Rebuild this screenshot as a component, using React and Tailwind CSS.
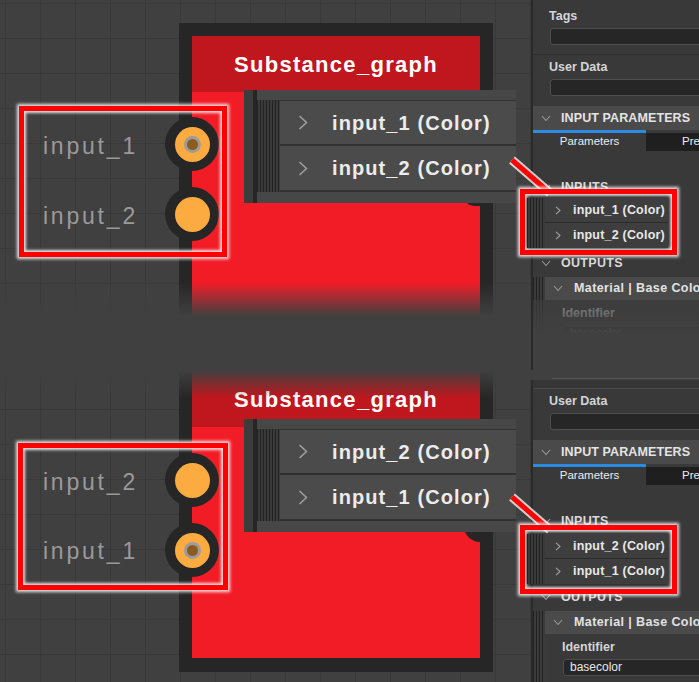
import React from "react";

const GRID =
  "bg-[linear-gradient(to_right,#393939_1px,transparent_1px),linear-gradient(to_bottom,#393939_1px,transparent_1px)] bg-[size:35px_35px]";
const STRIPES =
  "bg-[repeating-linear-gradient(to_right,#222222_0px,#222222_1px,#3a3a3a_1px,#3a3a3a_3px)]";
const GLOW = "shadow-[0_0_3px_2px_#ffffffd9,inset_0_0_3px_2px_#ffffffd9]";

const scenes = [
  {
    key: "top",
    height: "h-[370px]",
    grid: "bg-[position:5px_3px]",
    node: "top-[23px] h-[300px]",
    sockets: ["top-[117px]", "top-[187px]"],
    labels: ["top-[131px]", "top-[201px]"],
    order: ["input_1", "input_2"],
    popup: "top-[90px]",
    knob: "top-[196px] h-[10px]",
    leftBox: "top-[106px] h-[151px] left-[19px] w-[208px]",
    rightBox: "top-[189px] h-[66px]",
    line: "top-[153px]",
  },
  {
    key: "bottom",
    height: "h-[312px]",
    grid: "bg-[position:5px_4px]",
    node: "top-[-12px] h-[314px] pb-[14px]",
    sockets: ["top-[83px]", "top-[153px]"],
    labels: ["top-[97px]", "top-[166px]"],
    order: ["input_2", "input_1"],
    popup: "top-[49px]",
    knob: "top-[150px] h-[22px]",
    leftBox: "top-[73px] h-[147px] left-[18px] w-[210px]",
    rightBox: "top-[155px] h-[69px]",
    line: "top-[120px]",
  },
];

function Chevron({ dir = "right", big = false }) {
  if (dir === "down")
    return (
      <svg width="10" height="7" viewBox="0 0 10 7" className="shrink-0">
        <polyline points="1,1 5,5.5 9,1" fill="none" stroke="#9a9a9a" strokeWidth="1.1" />
      </svg>
    );
  if (big)
    return (
      <svg width="10" height="15" viewBox="0 0 10 15" className="shrink-0">
        <polyline points="1.5,1 8.5,7.5 1.5,14" fill="none" stroke="#a0a0a0" strokeWidth="1.5" />
      </svg>
    );
  return (
    <svg width="6" height="9" viewBox="0 0 6 9" className="shrink-0">
      <polyline points="1,0.8 5,4.5 1,8.2" fill="none" stroke="#a0a0a0" strokeWidth="1.1" />
    </svg>
  );
}

function Socket({ className, active }) {
  return (
    <div
      className={`absolute left-[165px] w-[54px] h-[54px] rounded-full bg-[#262626] flex items-center justify-center ${className}`}
    >
      <div className="w-[35px] h-[35px] rounded-full bg-[#fbab3f] flex items-center justify-center">
        {active && (
          <div className="w-[17px] h-[17px] rounded-full bg-[#9c9c9c] flex items-center justify-center">
            <div className="w-[11px] h-[11px] rounded-full bg-[#8b5b20]" />
          </div>
        )}
      </div>
    </div>
  );
}

function Node({ className }) {
  return (
    <div
      className={`absolute left-[179px] w-[314px] bg-[#262626] px-[13px] pt-[13px] flex flex-col ${className}`}
    >
      <div className="h-[56px] shrink-0 bg-[#c0161d] flex items-center justify-center">
        <span className="text-white text-[22px] font-bold tracking-[1.3px]">Substance_graph</span>
      </div>
      <div className="flex-1 bg-[#f21c27]" />
    </div>
  );
}

function Popup({ className, items }) {
  return (
    <div className={`absolute left-[244px] w-[272px] h-[113px] bg-[#474747] flex ${className}`}>
      <div className="w-[9px] bg-[#3c3c3c]" />
      <div className="w-[4px] bg-[#262626]" />
      <div className="flex-1 flex flex-col pt-[10px]">
        {items.map((t, i) => (
          <div key={t} className="flex h-[46px]">
            <div className={`w-[23px] ${STRIPES}`} />
            <div
              className={`flex-1 flex items-center pl-[18px] bg-[#4b4b4b] border-b-2 border-[#303030] ${
                i === 0 ? "border-t border-t-[#333333]" : ""
              }`}
            >
              <Chevron big />
              <span className="ml-[24px] text-[20px] font-bold tracking-[1.1px] text-[#ececec]">
                {t} (Color)
              </span>
            </div>
          </div>
        ))}
      </div>
    </div>
  );
}

function SectionTitle({ children, className = "" }) {
  return (
    <div className={`h-4 flex items-center pl-[8px] ${className}`}>
      <Chevron dir="down" />
      <span className="ml-[10px] text-[12.5px] font-bold tracking-[0.3px] text-[#d8d8d8]">{children}</span>
    </div>
  );
}

function Field({ label, value, className = "" }) {
  return (
    <div className={className}>
      <div className="h-4 leading-4 text-[12.5px] font-bold text-[#d4d4d4]">{label}</div>
      <div className="mt-[4px] ml-px h-[17px] w-[170px] rounded-[3px] border border-[#4e4e4e] bg-[#262626] pl-[6px] text-[12px] leading-[15px] text-[#e6e6e6]">
        {value}
      </div>
    </div>
  );
}

function PanelBody() {
  return (
    <>
      <Field label="User Data" className="pl-[16px]" />
      <div className="mt-[10px] h-[24px] shrink-0 bg-[#4a4a4a] flex items-center pl-[8px]">
        <Chevron dir="down" />
        <span className="ml-[10px] text-[12.5px] font-bold tracking-[0.1px] text-[#e4e4e4] whitespace-nowrap">
          INPUT PARAMETERS
        </span>
      </div>
      <div className="h-[3px] w-[113px] shrink-0 bg-[#2b8be3]" />
      <div className="flex h-[18px] shrink-0 text-[11.5px] text-[#ececec]">
        <div className="w-[113px] shrink-0 flex items-center justify-center">Parameters</div>
        <div className="w-[113px] shrink-0 bg-[#1f1f1f] flex items-center justify-center">Preview</div>
      </div>
      <SectionTitle className="mt-[28px]">INPUTS</SectionTitle>
      <SectionTitle className="mt-[60px]">OUTPUTS</SectionTitle>
      <div className="mt-[6px] flex">
        <div className={`w-[12px] shrink-0 ${STRIPES}`} />
        <div className="flex-1">
          <div className="h-[23px] bg-[#4a4a4a] flex items-center pl-[8px]">
            <Chevron dir="down" />
            <span className="ml-[11px] text-[12.5px] font-bold tracking-[0.4px] text-[#e2e2e2] whitespace-nowrap">
              Material | Base Color
            </span>
          </div>
          <Field label="Identifier" value="basecolor" className="pl-[17px] pt-[5px] pb-[20px]" />
        </div>
      </div>
    </>
  );
}

function Panel({ variant }) {
  if (variant === "top")
    return (
      <div className="relative w-[168px] flex flex-col border-l-2 border-[#2a2a2a] bg-[#393939] overflow-hidden">
        <Field label="Tags" className="pl-[16px] pt-[8px]" />
        <div className="mt-[9px] h-px shrink-0 bg-[#2f2f2f]" />
        <div className="mt-[4px] flex flex-col">
          <PanelBody />
        </div>
        <div className="absolute inset-x-0 top-[300px] bottom-0 bg-[linear-gradient(to_bottom,#40404080_0px,#404040_34px)]" />
      </div>
    );
  return (
    <div className="relative w-[168px] flex flex-col overflow-hidden">
      <div className="h-[8px] shrink-0" />
      <div className="h-px ml-[21px] shrink-0 bg-[#545454]" />
      <div className="h-px shrink-0" />
      <div className="flex-1 flex flex-col border-l-2 border-[#2a2a2a] bg-[#393939]">
        <div className="h-[9px] shrink-0 bg-[#363636] border-b border-[#4b4b4b]" />
        <div className="mt-[4px] flex flex-col">
          <PanelBody />
        </div>
      </div>
    </div>
  );
}

function Scene({ s }) {
  return (
    <div className={`relative flex ${s.height}`}>
      <div className={`relative w-[531px] overflow-hidden ${GRID} ${s.grid}`}>
        <Node className={s.node} />
        <div className={`absolute left-[464px] w-[29px] rounded-bl-[16px] bg-[#262626] ${s.knob}`} />
        {s.order.map((name, i) => (
          <React.Fragment key={name}>
            <Socket className={s.sockets[i]} active={name === "input_1"} />
            <div
              className={`absolute left-0 w-[138px] text-right text-[23px] leading-[30px] tracking-[2.8px] text-[#9a9a9a] ${s.labels[i]}`}
            >
              {name}
            </div>
          </React.Fragment>
        ))}
        <Popup className={s.popup} items={s.order} />
        {s.key === "top" ? (
          <div className="absolute inset-x-0 top-[282px] bottom-0 bg-[linear-gradient(to_bottom,#40404000_0px,#404040_34px)]" />
        ) : (
          <div className="absolute inset-x-0 top-0 h-[28px] bg-[linear-gradient(to_bottom,#404040_0px,#40404000_28px)]" />
        )}
      </div>
      <Panel variant={s.key} />

      <div className={`absolute border-[5px] border-[#ff0000] ${GLOW} ${s.leftBox}`} />

      <svg className={`absolute left-[505px] w-[52px] h-[48px] ${s.line}`} viewBox="0 0 52 48">
        <line x1="7" y1="7" x2="45" y2="40" stroke="#ffffff" strokeOpacity="0.75" strokeWidth="9" />
        <line x1="7" y1="7" x2="45" y2="40" stroke="#ff0000" strokeWidth="5" />
      </svg>

      <div className={`absolute left-[520px] w-[157px] border-[5px] border-[#ff0000] ${GLOW} ${s.rightBox}`}>
        <div className="absolute left-[2px] top-[4px] right-[4px] flex shadow-[0_0_4px_#00000080]">
          <div className={`w-[18px] ${STRIPES}`} />
          <div className="flex-1 flex flex-col">
            {s.order.map((name, i) => (
              <div
                key={name}
                className={`h-[25px] flex items-center pl-[10px] bg-[#3e3e3e] ${
                  i === 0 ? "border-b border-[#2c2c2c]" : ""
                }`}
              >
                <Chevron />
                <span className="ml-[12px] text-[12.5px] font-bold tracking-[0.2px] text-[#e8e8e8] whitespace-nowrap">
                  {name} (Color)
                </span>
              </div>
            ))}
          </div>
        </div>
      </div>
    </div>
  );
}

export default function App() {
  return (
    <div className="w-[699px] h-[682px] overflow-hidden bg-[#404040] font-['Liberation_Sans',Arial,sans-serif]">
      {scenes.map((s) => (
        <Scene key={s.key} s={s} />
      ))}
    </div>
  );
}
